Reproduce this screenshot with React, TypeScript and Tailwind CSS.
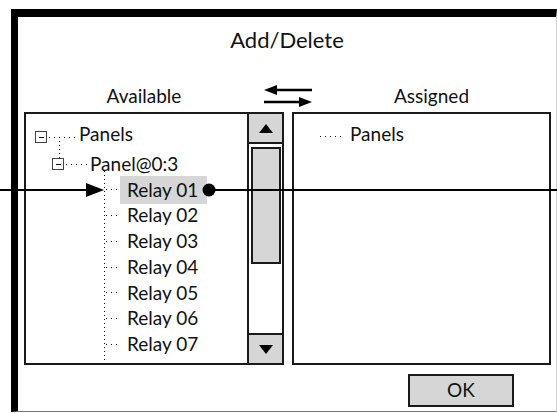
import React from "react";

const dotsX = "h-px bg-[repeating-linear-gradient(to_right,#111_0_1px,transparent_1px_5px)]";
const dotsY = "absolute w-px bg-[repeating-linear-gradient(to_bottom,#111_0_1px,transparent_1px_4px)]";

function Expander({ className = "" }: { className?: string }) {
  return (
    <span className={`flex h-[12px] w-[12px] shrink-0 items-center justify-center border border-[#444] bg-white ${className}`}>
      <span className="h-px w-[5px] bg-[#111]" />
    </span>
  );
}

const relays = ["Relay 01", "Relay 02", "Relay 03", "Relay 04", "Relay 05", "Relay 06", "Relay 07"];

function Tree() {
  return (
    <div className="relative flex-1 overflow-hidden pt-[7px]">
      <div className={`${dotsY} left-[33px] top-[27px] h-[18px]`} />
      <div className={`${dotsY} left-[78px] top-[57px] h-[190px]`} />

      <div className="flex h-[26px] items-center pl-[9px]">
        <Expander className="mt-[6px]" />
        <div className={`${dotsX} ml-[2px] mt-[6px] w-[28px]`} />
        <span className="ml-[2px]">Panels</span>
      </div>
      <div className="mt-[4px] flex h-[26px] items-center pl-[26px]">
        <Expander />
        <div className={`${dotsX} ml-[2px] w-[22px]`} />
        <span className="ml-[2px]">Panel@0:3</span>
      </div>
      {relays.map((r, i) => (
        <div key={r} className="flex h-[25.75px] items-center pl-[79px]">
          <div className={`${dotsX} ml-px w-[14px]`} />
          <span
            className={`flex h-[28px] items-center pl-[7px] pr-[9px] ${i === 0 ? "bg-[#d6d6d6]" : ""}`}
          >
            {r}
          </span>
        </div>
      ))}
    </div>
  );
}

function Triangle({ up }: { up?: boolean }) {
  return (
    <svg width="14" height="9" viewBox="0 0 14 9">
      <polygon points={up ? "7,0 14,9 0,9" : "0,0 14,0 7,9"} fill="#000" />
    </svg>
  );
}

function Scrollbar() {
  return (
    <div className="flex w-[35px] flex-col border-l-2 border-[#1a1a1a]">
      <div className="flex h-[30px] items-center justify-center border-b-2 border-[#1a1a1a] bg-[#d6d6d6]">
        <Triangle up />
      </div>
      <div className="flex-1 pl-[2px] pr-[1px] pt-[3px]">
        <div className="h-[117px] border-2 border-[#1a1a1a] bg-[#d6d6d6]" />
      </div>
      <div className="flex h-[30px] items-center justify-center border-t-2 border-[#1a1a1a] bg-[#d6d6d6]">
        <Triangle />
      </div>
    </div>
  );
}

function SwapArrows() {
  return (
    <svg width="48" height="27" viewBox="0 0 48 27">
      <line x1="10" y1="7" x2="48" y2="7" stroke="#000" strokeWidth="2.5" />
      <polygon points="0,7 13,2 13,12" fill="#000" />
      <line x1="0" y1="19" x2="38" y2="19" stroke="#000" strokeWidth="2.5" />
      <polygon points="48,19 35,14 35,24" fill="#000" />
    </svg>
  );
}

export default function App() {
  return (
    <div className="relative h-[413px] w-[557px] overflow-hidden bg-white pl-[11px] pt-[9px] font-[Lato,Carlito,sans-serif] text-[#111]">
      <div className="flex h-[403px] w-[546px] flex-col border-b border-l-[7px] border-r border-t-[8px] border-black border-b-[#777] border-r-[#d0d0d0]">
        <div className="flex h-[44px] items-center justify-center text-[22px]">Add/Delete</div>

        <div className="mt-[22px] flex h-[27px] items-center pl-[6px] text-[19px]">
          <div className="w-[240px] text-center">Available</div>
          <SwapArrows />
          <div className="w-[239px] text-center">Assigned</div>
        </div>

        <div className="mt-[2px] flex h-[253px] gap-[8px] pl-[6px] text-[19px]">
          <div className="flex w-[260px] border-2 border-[#1a1a1a]">
            <Tree />
            <Scrollbar />
          </div>
          <div className="w-[259px] border-2 border-[#1a1a1a] pt-[7px]">
            <div className="flex h-[26px] items-center pl-[26px]">
              <div className={`${dotsX} mt-[5px] w-[25px]`} />
              <span className="ml-[5px]">Panels</span>
            </div>
          </div>
        </div>

        <div className="mt-[9px] flex pl-[390px]">
          <button className="flex h-[33px] w-[106px] items-center justify-center border-2 border-[#1a1a1a] bg-[#d6d6d6] text-[19px]">
            OK
          </button>
        </div>
      </div>

      <svg className="pointer-events-none absolute left-0 top-0" width="557" height="413" viewBox="0 0 557 413">
        <line x1="0" y1="190" x2="92" y2="190" stroke="#000" strokeWidth="2" />
        <polygon points="104,190 86,183 86,197" fill="#000" />
        <circle cx="209" cy="190" r="6.5" fill="#000" />
        <line x1="209" y1="190" x2="557" y2="190" stroke="#000" strokeWidth="2" />
      </svg>
    </div>
  );
}
